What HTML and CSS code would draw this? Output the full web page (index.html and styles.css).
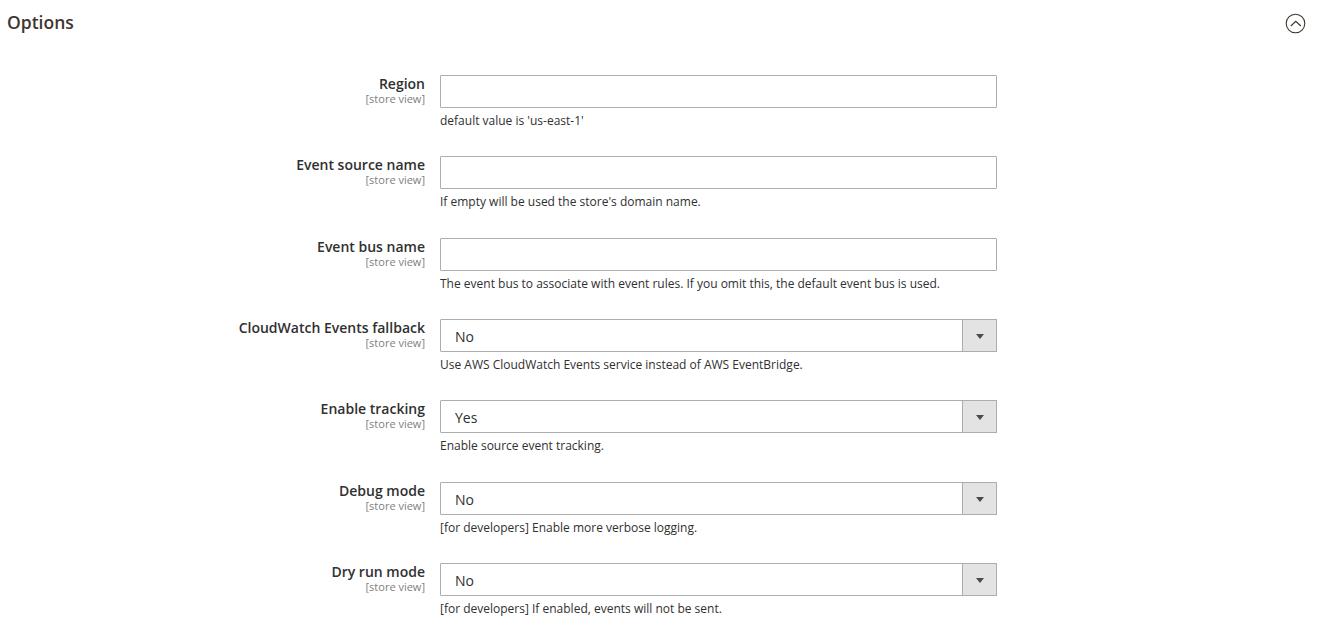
FILE: index.html
```html
<!DOCTYPE html>
<html lang="en">
<head>
<meta charset="utf-8">
<title>Options</title>
<link rel="stylesheet" href="styles.css">
</head>
<body>
<div class="section">
  <div class="section-header">
    <h2 class="section-title">Options</h2>
    <svg class="collapse-icon" width="21" height="21" viewBox="0 0 21 21" aria-hidden="true">
      <circle cx="10.5" cy="10.5" r="9.3" fill="none" stroke="#41362f" stroke-width="1.1"/>
      <path d="M5.8 13 L10.8 8.3 L15.8 13" fill="none" stroke="#41362f" stroke-width="1.2"/>
    </svg>
  </div>
  <div class="form">
    <div class="row">
      <div class="label"><span class="label-text">Region</span><span class="scope">[store view]</span></div>
      <div class="control">
        <input class="input" type="text">
        <p class="note">default value is 'us-east-1'</p>
      </div>
    </div>
    <div class="row">
      <div class="label"><span class="label-text">Event source name</span><span class="scope">[store view]</span></div>
      <div class="control">
        <input class="input" type="text">
        <p class="note">If empty will be used the store's domain name.</p>
      </div>
    </div>
    <div class="row">
      <div class="label"><span class="label-text">Event bus name</span><span class="scope">[store view]</span></div>
      <div class="control">
        <input class="input" type="text">
        <p class="note">The event bus to associate with event rules. If you omit this, the default event bus is used.</p>
      </div>
    </div>
    <div class="row">
      <div class="label"><span class="label-text">CloudWatch Events fallback</span><span class="scope">[store view]</span></div>
      <div class="control">
        <div class="select-wrap">
          <select class="select"><option>No</option><option>Yes</option></select>
          <span class="select-arrow"></span>
        </div>
        <p class="note">Use AWS CloudWatch Events service instead of AWS EventBridge.</p>
      </div>
    </div>
    <div class="row">
      <div class="label"><span class="label-text">Enable tracking</span><span class="scope">[store view]</span></div>
      <div class="control">
        <div class="select-wrap">
          <select class="select"><option>Yes</option><option>No</option></select>
          <span class="select-arrow"></span>
        </div>
        <p class="note">Enable source event tracking.</p>
      </div>
    </div>
    <div class="row">
      <div class="label"><span class="label-text">Debug mode</span><span class="scope">[store view]</span></div>
      <div class="control">
        <div class="select-wrap">
          <select class="select"><option>No</option><option>Yes</option></select>
          <span class="select-arrow"></span>
        </div>
        <p class="note">[for developers] Enable more verbose logging.</p>
      </div>
    </div>
    <div class="row">
      <div class="label"><span class="label-text">Dry run mode</span><span class="scope">[store view]</span></div>
      <div class="control">
        <div class="select-wrap">
          <select class="select"><option>No</option><option>Yes</option></select>
          <span class="select-arrow"></span>
        </div>
        <p class="note">[for developers] If enabled, events will not be sent.</p>
      </div>
    </div>
  </div>
</div>
</body>
</html>
```
FILE: styles.css
```css
* { box-sizing: border-box; }

html, body {
  margin: 0;
  padding: 0;
  background: #ffffff;
}

body {
  font-family: "Open Sans", "Liberation Sans", sans-serif;
  color: #303030;
}

.section-header {
  display: flex;
  justify-content: space-between;
  align-items: flex-start;
  height: 60px;
  padding: 12px 13px 0 7px;
}

.section-title {
  margin: 0;
  font-size: 17.5px;
  line-height: 20px;
  font-weight: 600;
  color: #41362f;
}

.collapse-icon {
  display: block;
  margin-top: 1px;
}

.row {
  display: flex;
  align-items: flex-start;
  padding: 15px 0 11.333px;
}

.label {
  width: 440px;
  padding-right: 15px;
  padding-top: 1px;
  display: flex;
  flex-direction: column;
  align-items: flex-end;
  text-align: right;
}

.label-text {
  font-size: 14px;
  line-height: 16px;
  font-weight: 600;
  color: #303030;
}

.scope {
  font-size: 11px;
  line-height: 14px;
  color: #808080;
}

.control {
  width: 557px;
}

.input {
  display: block;
  width: 100%;
  height: 33px;
  margin: 0;
  border: 1px solid #adadad;
  border-radius: 1px;
  background: #ffffff;
  padding: 0 14px;
  font-family: inherit;
  font-size: 14px;
  color: #303030;
}

.select-wrap {
  position: relative;
  width: 100%;
  height: 33px;
}

.select {
  display: block;
  width: 100%;
  height: 33px;
  margin: 0;
  border: 1px solid #adadad;
  border-radius: 1px;
  background: #ffffff;
  padding: 2px 40px 0 14px;
  font-family: inherit;
  font-size: 14px;
  color: #303030;
  -webkit-appearance: none;
  appearance: none;
}

.select-arrow {
  position: absolute;
  top: 0;
  right: 0;
  width: 35px;
  height: 33px;
  background: #e3e3e3;
  border: 1px solid #adadad;
  pointer-events: none;
}

.select-arrow::after {
  content: "";
  position: absolute;
  left: 12.5px;
  top: 14px;
  border-left: 4px solid transparent;
  border-right: 4px solid transparent;
  border-top: 5px solid #514943;
}

.note {
  margin: 4px 0 0;
  font-size: 12px;
  line-height: 18px;
  color: #303030;
}
```
